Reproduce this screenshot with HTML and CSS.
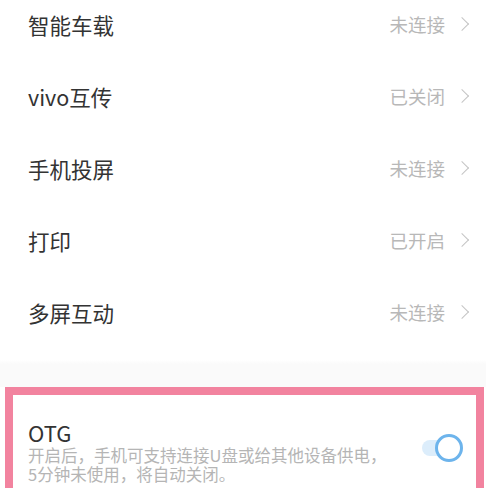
FILE: index.html
```html
<!DOCTYPE html>
<html lang="zh-CN">
<head>
    <meta charset="UTF-8">
    <meta name="viewport" content="width=device-width, initial-scale=1.0">
    <title>连接与共享</title>
    <link rel="stylesheet" href="styles.css">
</head>
<body>
    <div class="list">
        <div class="row">
            <span class="title">智能车载</span>
            <span class="status">未连接</span>
            <span class="chevron"></span>
        </div>
        <div class="row">
            <span class="title">vivo互传</span>
            <span class="status">已关闭</span>
            <span class="chevron"></span>
        </div>
        <div class="row">
            <span class="title">手机投屏</span>
            <span class="status">未连接</span>
            <span class="chevron"></span>
        </div>
        <div class="row">
            <span class="title">打印</span>
            <span class="status">已开启</span>
            <span class="chevron"></span>
        </div>
        <div class="row">
            <span class="title">多屏互动</span>
            <span class="status">未连接</span>
            <span class="chevron"></span>
        </div>
    </div>

    <div class="gap"></div>

    <!-- highlighted OTG item -->
    <div class="otg-box">
        <div class="otg">
            <div class="otg-text">
                <div class="otg-title">OTG</div>
                <div class="otg-desc">开启后，手机可支持连接U盘或给其他设备供电，<br>5分钟未使用，将自动关闭。</div>
            </div>
            <div class="switch"><span class="knob"></span></div>
        </div>
    </div>
</body>
</html>
```

FILE: styles.css
```css
body {
    margin: 0;
    padding: 0;
    height: 488px;
    overflow: hidden;
    background-color: white;
    font-family: 'Noto Sans CJK SC', 'Noto Sans', sans-serif;
}

.list {
    margin-top: -12px;
}

.row {
    height: 72px;
    display: flex;
    align-items: center;
    padding: 0 15px 0 28px;
}

.title {
    flex: 1;
    font-size: 21.5px;
    color: #333333;
}

.status {
    font-size: 18.5px;
    color: #b8b8b8;
    margin-right: 12px;
}

.chevron {
    width: 9px;
    height: 9px;
    border-top: 1.5px solid #c4c4c4;
    border-right: 1.5px solid #c4c4c4;
    transform: rotate(45deg);
    margin-right: 4px;
}

.gap {
    height: 39px;
    background: linear-gradient(#ffffff 0, #ffffff 12px, #fafafa 16px);
}

.otg-box {
    margin-left: 5px;
    width: 463px;
    height: 100px;
    border: 8px solid #f2839f;
    border-bottom: none;
    background-color: white;
}

.otg {
    display: flex;
    align-items: flex-start;
    padding: 23px 0 0 15px;
}

.otg-text {
    flex: 1;
}

.otg-title {
    font-size: 22px;
    line-height: 28px;
    color: #333333;
}

.otg-desc {
    font-size: 16.5px;
    line-height: 19px;
    white-space: nowrap;
    color: #b5b5b5;
}

.switch {
    position: relative;
    flex-shrink: 0;
    width: 40px;
    height: 16px;
    margin: 22px 14px 0 0;
    border-radius: 8px;
    background-color: #dcedfb;
}

.knob {
    position: absolute;
    right: -1px;
    top: -6px;
    width: 22px;
    height: 22px;
    border: 3px solid #6db4ec;
    border-radius: 50%;
    background-color: white;
}
```
